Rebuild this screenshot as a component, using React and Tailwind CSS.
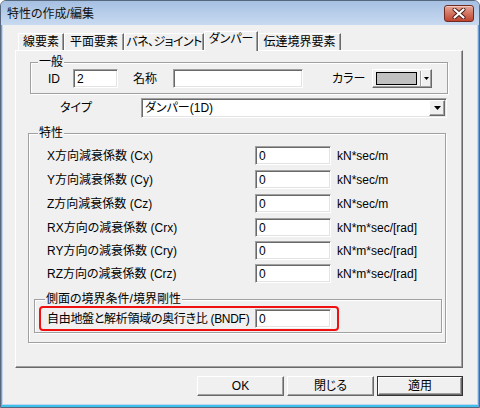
import React from "react";

const editCls =
  "bg-white border border-t-[#a0a0a0] border-l-[#a0a0a0] border-r-white border-b-white shadow-[inset_1px_1px_0_#696969,inset_-1px_-1px_0_#e3e3e3] pl-[3px] flex items-center overflow-hidden whitespace-nowrap";
const raisedCls =
  "bg-[#f0f0f0] border border-t-white border-l-white border-r-[#696969] border-b-[#696969] shadow-[inset_-1px_-1px_0_#a0a0a0]";
const etchedCls =
  "relative border border-[#a0a0a0] shadow-[1px_1px_0_#fff,inset_1px_1px_0_#fff]";
const tabCls =
  "mt-[2px] h-[17px] flex items-center justify-center whitespace-nowrap border-t border-l border-r border-t-white border-l-white border-r-[#696969] shadow-[inset_-1px_0_0_#a0a0a0]";

function Arrow({ w = 7, h = 4 }) {
  return (
    <svg width={w} height={h} viewBox={`0 0 ${w} ${h}`}>
      <polygon points={`0,0 ${w},0 ${w / 2},${h}`} fill="#000" />
    </svg>
  );
}

const rows = [
  ["X方向減衰係数 (Cx)", "kN*sec/m", ""],
  ["Y方向減衰係数 (Cy)", "kN*sec/m", "mt-[5px]"],
  ["Z方向減衰係数 (Cz)", "kN*sec/m", "mt-[5px]"],
  ["RX方向の減衰係数 (Crx)", "kN*m*sec/[rad]", "mt-[5px]"],
  ["RY方向の減衰係数 (Cry)", "kN*m*sec/[rad]", "mt-[4px]"],
  ["RZ方向の減衰係数 (Crz)", "kN*m*sec/[rad]", "mt-[4px]"],
];

export default function App() {
  return (
    <div className="w-[480px] h-[408px] border border-[#56677e] rounded-t-[6px] bg-[#c2d6ef] flex flex-col overflow-hidden text-[12px] text-black font-['Liberation_Sans','Noto_Sans_CJK_JP',sans-serif] [font-feature-settings:'palt'] leading-none">
      {/* title bar */}
      <div className="h-[24px] flex justify-between bg-gradient-to-b from-[#a6c0e2] to-[#c8daf0]">
        <div className="pl-[6px] pt-[7px] text-[12px] text-[#111]">特性の作成/編集</div>
        <div className="mt-[4px] mr-[5px] w-[30px] h-[17px] rounded-[3px] border border-[#6e2b22] bg-gradient-to-b from-[#e7a899] via-[#d2735f] to-[#c0432f] shadow-[inset_0_1px_0_#f3c9bf] flex items-center justify-center">
          <svg width="14" height="11" viewBox="0 0 14 11">
            <path d="M2.5 1.5 L11.5 9.5 M11.5 1.5 L2.5 9.5" stroke="#4a1c16" strokeWidth="4" strokeLinecap="round" />
            <path d="M2.5 1.5 L11.5 9.5 M11.5 1.5 L2.5 9.5" stroke="#fff" strokeWidth="2.2" strokeLinecap="round" />
          </svg>
        </div>
      </div>

      {/* frame */}
      <div className="flex-1 flex flex-col px-[2px] pb-[3px] shadow-[inset_1px_0_0_#6d9fd6,inset_-1px_0_0_#6d9fd6,inset_0_-2px_0_#3fc0ea]">
        <div className="flex-1 bg-[#f0f0f0] flex flex-col">
          {/* tabs */}
          <div className="ml-[15px] mt-[6px] h-[19px] flex items-start">
            <div className={`${tabCls} w-[46px]`}>線要素</div>
            <div className={`${tabCls} w-[60px]`}>平面要素</div>
            <div className={`${tabCls} w-[80px] tracking-[-0.6px]`}>バネ、ジョイント</div>
            <div className="relative z-10 h-[20px] w-[54px] bg-[#f0f0f0] flex items-center justify-center whitespace-nowrap pb-[6px] border-t border-l border-r border-t-white border-l-white border-r-[#696969] shadow-[inset_-1px_0_0_#a0a0a0]">ダンパー</div>
            <div className={`${tabCls} w-[83px]`}>伝達境界要素</div>
          </div>

          {/* panel */}
          <div className="ml-[12px] w-[448px] h-[318px] border border-t-white border-l-white border-r-[#696969] border-b-[#696969] shadow-[inset_-1px_-1px_0_#a0a0a0] flex flex-col">
            {/* 一般 */}
            <div className={`${etchedCls} ml-[14px] mt-[11px] w-[418px] h-[32px]`}>
              <span className="absolute left-[7px] top-[-8px] px-[1px] bg-[#f0f0f0] leading-[14px]">一般</span>
              <div className="flex items-center pl-[17px] pt-[6px]">
                <span className="w-[25px]">ID</span>
                <div className={`${editCls} w-[45px] h-[19px]`}>2</div>
                <span className="ml-[15px] w-[40px]">名称</span>
                <div className={`${editCls} w-[130px] h-[19px]`}></div>
                <span className="ml-[29px] w-[40px]">カラー</span>
                <div className={`${raisedCls} w-[60px] h-[19px] flex items-center pl-[3px]`}>
                  <div className="w-[41px] h-[13px] bg-[#c0c0c0] border border-black"></div>
                  <div className="ml-[3px] w-[2px] h-[15px] border-l border-l-[#a0a0a0] border-r border-r-white"></div>
                  <div className="ml-[2px] flex items-center">
                    <Arrow w={5} h={3} />
                  </div>
                </div>
              </div>
            </div>

            {/* タイプ */}
            <div className="mt-[4px] h-[20px] flex items-center">
              <span className="ml-[44px] w-[81px]">タイプ</span>
              <div className={`${editCls} w-[306px] h-[20px] justify-between pr-[1px]`}>
                <span>ダンパー(1D)</span>
                <div className={`${raisedCls} w-[16px] h-[16px] flex items-center justify-center`}>
                  <Arrow w={7} h={4} />
                </div>
              </div>
            </div>

            {/* 特性 */}
            <div className={`${etchedCls} ml-[12px] mt-[15px] w-[418px] h-[210px]`}>
              <span className="absolute left-[9px] top-[-8px] px-[1px] bg-[#f0f0f0] leading-[14px]">特性</span>
              <div className="flex flex-col pt-[12px]">
                {rows.map(([label, unit, mt]) => (
                  <div key={label} className={`ml-[18px] h-[19px] flex items-center ${mt}`}>
                    <span className="w-[208px] whitespace-nowrap">{label}</span>
                    <div className={`${editCls} w-[76px] h-[19px]`}>0</div>
                    <span className="ml-[6px] whitespace-nowrap">{unit}</span>
                  </div>
                ))}

                <div className={`${etchedCls} ml-[5px] mt-[16px] w-[408px] h-[34px]`}>
                  <span className="absolute left-[10px] top-[-8px] px-[1px] bg-[#f0f0f0] leading-[14px] whitespace-nowrap">側面の境界条件/境界剛性</span>
                  <div className="ml-[4px] mt-[6px] w-[300px] h-[25px] border-2 border-[#f01010] rounded-[4px] flex items-center pl-[6px]">
                    <span className="w-[208px] whitespace-nowrap tracking-[-0.3px]">自由地盤と解析領域の奥行き比 (BNDF)</span>
                    <div className={`${editCls} w-[76px] h-[19px]`}>0</div>
                  </div>
                </div>
              </div>
            </div>
          </div>

          {/* buttons */}
          <div className="mt-[8px] mr-[14px] flex justify-end gap-[3px]">
            <div className={`${raisedCls} w-[87px] h-[20px] flex items-center justify-center`}>OK</div>
            <div className={`${raisedCls} w-[87px] h-[20px] flex items-center justify-center`}>閉じる</div>
            <div className="w-[86px] h-[20px] border border-[#333] flex">
              <div className={`${raisedCls} flex-1 flex items-center justify-center`}>適用</div>
            </div>
          </div>
        </div>
      </div>
    </div>
  );
}
